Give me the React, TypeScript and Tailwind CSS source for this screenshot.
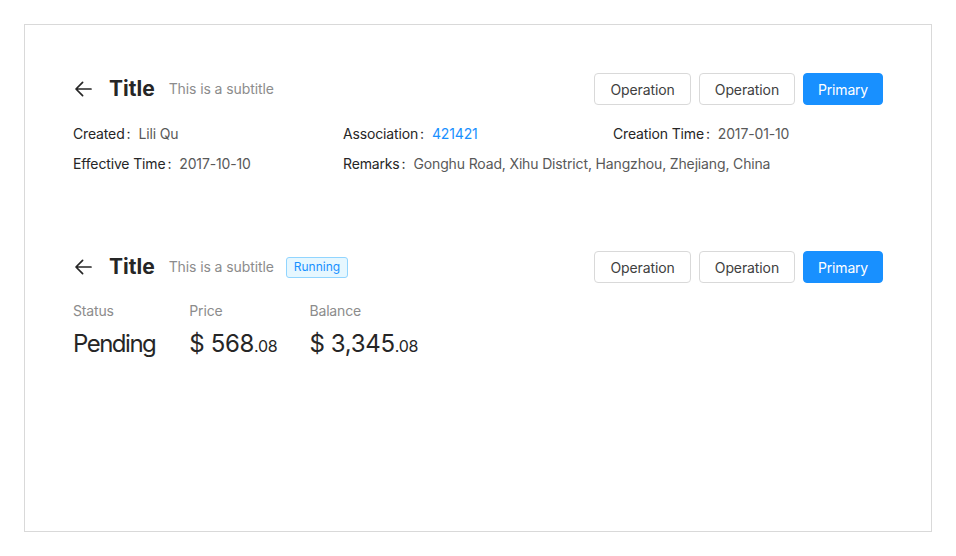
import React from "react";

function Back() {
  return (
    <svg width="18" height="18" viewBox="0 0 18 18" className="shrink-0">
      <path d="M17 9H2.2M8.6 2.4L2 9l6.6 6.6" stroke="#262626" strokeWidth="1.7" fill="none" strokeLinecap="round" strokeLinejoin="round" />
    </svg>
  );
}

function Btn({ children, primary }: { children: React.ReactNode; primary?: boolean }) {
  return primary ? (
    <button className="h-8 px-[14px] rounded-[4px] bg-[#1890ff] border border-[#1890ff] text-white text-[14px] tracking-[-0.2px]">
      {children}
    </button>
  ) : (
    <button className="h-8 px-[15px] rounded-[4px] bg-white border border-[#d9d9d9] text-[#404040] text-[14px] tracking-[-0.1px]">
      {children}
    </button>
  );
}

function Heading({ tag }: { tag?: boolean }) {
  return (
    <div className="flex items-center justify-between h-8">
      <div className="flex items-center">
        <div className="ml-[1px] mr-[17px] flex items-center"><Back /></div>
        <span className="text-[21px] font-bold text-[#262626] leading-8 mr-[14px]">Title</span>
        <span className="text-[14px] text-[#8c8c8c] leading-[22px] mr-3 tracking-[-0.1px]">This is a subtitle</span>
        {tag && (
          <span className="h-[21px] px-[7px] flex items-center text-[12px] text-[#1890ff] bg-[#e6f7ff] border border-[#91d5ff] rounded-[3px]">
            Running
          </span>
        )}
      </div>
      <div className="flex items-center gap-2">
        <Btn>Operation</Btn>
        <Btn>Operation</Btn>
        <Btn primary>Primary</Btn>
      </div>
    </div>
  );
}

function Item({ label, children }: { label: string; children: React.ReactNode }) {
  return (
    <div className="flex items-center text-[14px] leading-[22px] tracking-[-0.15px]">
      <span className="text-[#262626]">{label}</span>
      <span className="text-[#262626] ml-[2px] mr-[8px]">:</span>
      <span className="text-[#595959]">{children}</span>
    </div>
  );
}

function Stat({ title, children, className }: { title: string; children: React.ReactNode; className?: string }) {
  return (
    <div className={className}>
      <div className="text-[14px] leading-[22px] text-[#8c8c8c] tracking-[-0.15px]">{title}</div>
      <div className="mt-[6px] text-[24px] leading-8 text-[#262626] flex items-baseline">{children}</div>
    </div>
  );
}

export default function App() {
  return (
    <div className="w-[956px] h-[556px] p-6 bg-white" style={{ fontFamily: "Inter, 'Noto Sans', sans-serif" }}>
      <div className="h-full border border-[#d9d9d9] px-12 pt-12">
        <Heading />
        <div className="mt-[18px] grid grid-cols-3 gap-y-2 w-[810px]">
          <Item label="Created">Lili Qu</Item>
          <Item label="Association">
            <span className="text-[#1890ff]">421421</span>
          </Item>
          <Item label="Creation Time">2017-01-10</Item>
          <Item label="Effective Time">2017-10-10</Item>
          <div className="col-span-2">
            <Item label="Remarks">Gonghu Road, Xihu District, Hangzhou, Zhejiang, China</Item>
          </div>
        </div>
        <div className="mt-[76px]">
          <Heading tag />
        </div>
        <div className="mt-[17px] flex">
          <Stat title="Status">
            <span className="tracking-[-1.5px]">Pending</span>
          </Stat>
          <Stat title="Price" className="ml-[34px] mr-8">
            <span className="mr-[6px]">$</span>
            <span className="tracking-[-0.3px]">568</span>
            <span className="text-[16px] tracking-[-0.3px]">.08</span>
          </Stat>
          <Stat title="Balance">
            <span className="mr-[6px]">$</span>
            <span className="tracking-[-0.3px]">3,345</span>
            <span className="text-[16px] tracking-[-0.3px]">.08</span>
          </Stat>
        </div>
      </div>
    </div>
  );
}
